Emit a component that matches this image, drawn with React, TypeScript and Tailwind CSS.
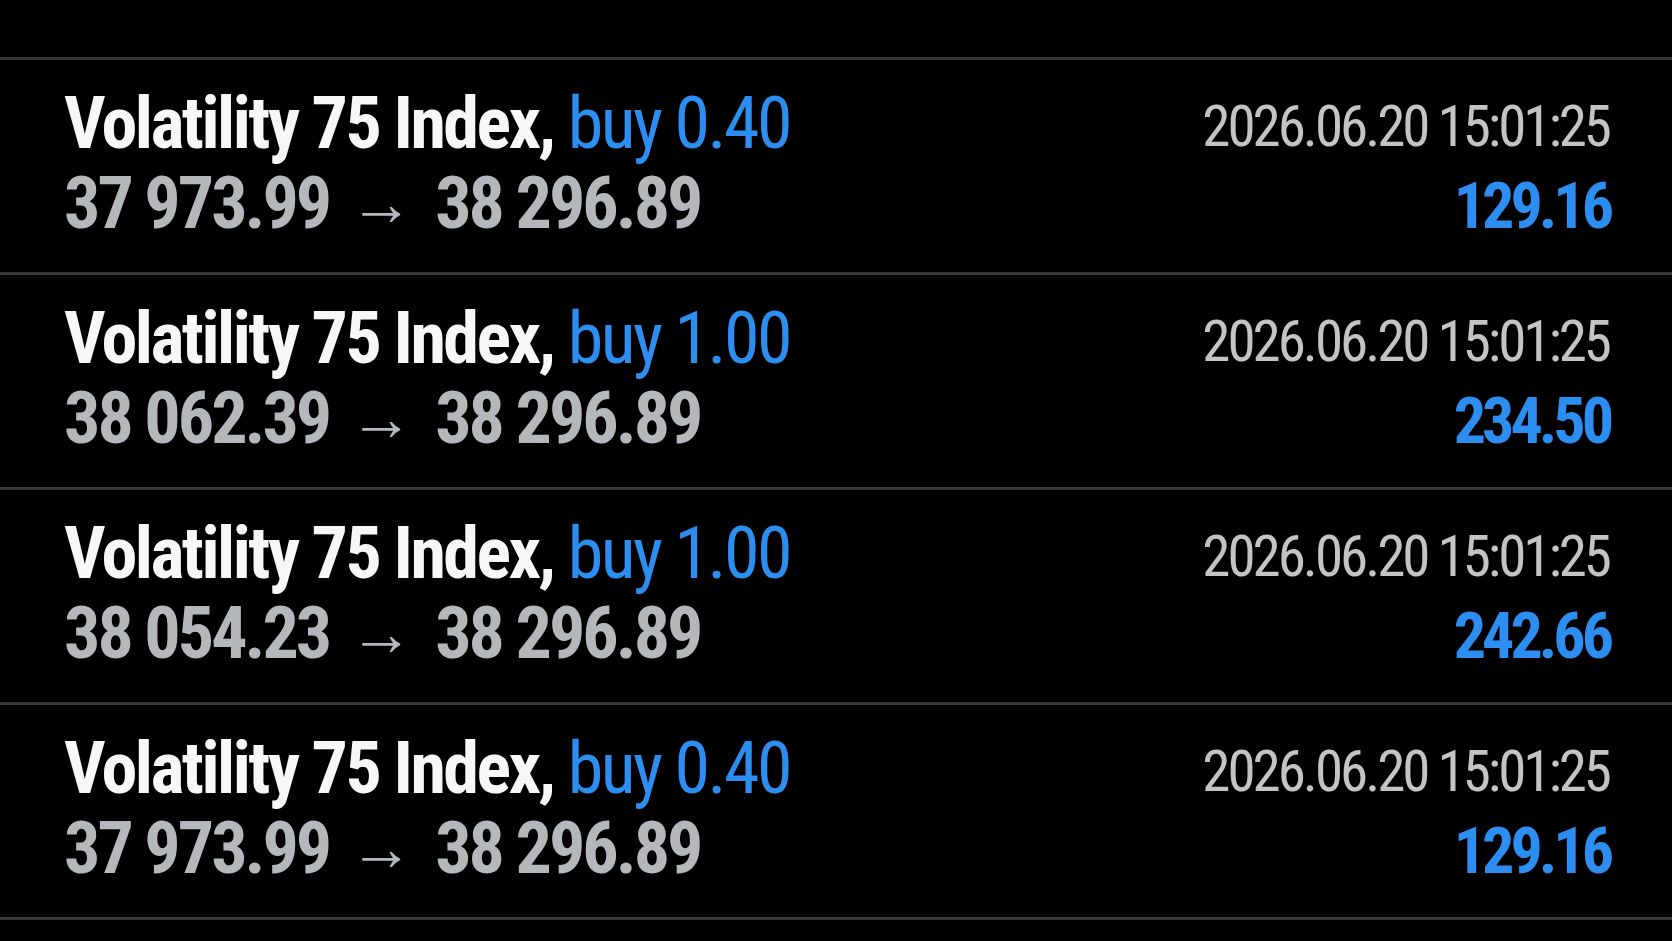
const trades = [
  { lots: "0.40", open: "37 973.99", close: "38 296.89", time: "2026.06.20 15:01:25", profit: "129.16" },
  { lots: "1.00", open: "38 062.39", close: "38 296.89", time: "2026.06.20 15:01:25", profit: "234.50" },
  { lots: "1.00", open: "38 054.23", close: "38 296.89", time: "2026.06.20 15:01:25", profit: "242.66" },
  { lots: "0.40", open: "37 973.99", close: "38 296.89", time: "2026.06.20 15:01:25", profit: "129.16" },
];

export default function App() {
  return (
    <div
      className="min-h-screen w-full bg-black pt-[57px] text-white"
      style={{ fontFamily: '"Roboto Condensed", Roboto, "Liberation Sans", sans-serif' }}
    >
      {trades.map((t, i) => (
        <div
          key={i}
          className="flex h-[215px] justify-between border-t-[3px] border-[#38383c] pl-[64px] pr-[66px]"
        >
          {/* Symbol and prices */}
          <div className="pt-[24px]">
            <div className="whitespace-nowrap text-[72px] leading-[80px] tracking-[-2.5px]">
              <span className="font-bold text-[#f7f7f7]">Volatility 75 Index,</span>{" "}
              <span className="font-normal text-[#2b8ef0]">buy {t.lots}</span>
            </div>
            <div className="flex items-center whitespace-nowrap text-[72px] font-bold leading-[80px] tracking-[-3px] text-[#b4b7bc]">
              <span>{t.open}</span>
              <span className="ml-[20px] mr-[22px] text-[64px] font-normal tracking-normal">→</span>
              <span>{t.close}</span>
            </div>
          </div>

          {/* Time and profit */}
          <div className="flex flex-col items-end pt-[27px]">
            <div className="-mr-[3px] whitespace-nowrap text-[57px] font-normal leading-[80px] tracking-[-3px] text-[#c4c4c6]">
              {t.time}
            </div>
            <div className="-mr-[4px] whitespace-nowrap text-[64px] font-bold leading-[80px] tracking-[-4px] text-[#2b8ef0]">
              {t.profit}
            </div>
          </div>
        </div>
      ))}
      <div className="border-t-[3px] border-[#38383c]" />
    </div>
  );
}
